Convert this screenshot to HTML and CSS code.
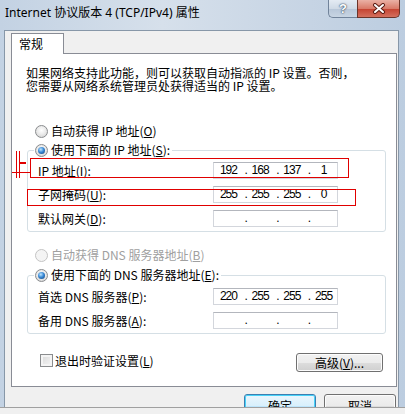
FILE: index.html
```html
<!DOCTYPE html>
<html lang="zh-CN">
<head>
    <meta charset="UTF-8">
    <meta name="viewport" content="width=device-width, initial-scale=1.0">
    <title>Internet 协议版本 4 (TCP/IPv4) 属性</title>
    <link rel="stylesheet" href="styles.css">
</head>
<body>
<div class="window">
    <div class="titlebar">
        <span class="title">Internet 协议版本 4 (TCP/IPv4) 属性</span>
        <div class="caption-btns">
            <span class="cap-btn help">?</span>
            <span class="cap-btn close">
                <svg width="14" height="11" viewBox="0 0 14 11">
                    <path d="M3 2 L11 9 M11 2 L3 9" stroke="#5b1d14" stroke-width="4" stroke-linecap="round"/>
                    <path d="M3 2 L11 9 M11 2 L3 9" stroke="#fff" stroke-width="2" stroke-linecap="round"/>
                </svg>
            </span>
        </div>
    </div>
    <div class="dialog">
        <div class="tabs"><span class="tab">常规</span></div>
        <div class="panel">
            <svg class="marker" width="20" height="30" viewBox="0 0 20 30">
                <path d="M4.5 1 V28 M7.5 1 V28 M0 22.5 H18" stroke="#e00000" stroke-width="1" fill="none"/>
                <rect x="8" y="12" width="6" height="2" fill="#e00000"/>
            </svg>
            <p class="intro">如果网络支持此功能，则可以获取自动指派的 IP 设置。否则，<br>您需要从网络系统管理员处获得适当的 IP 设置。</p>
            <label class="radio outer"><span class="dot"></span>自动获得 IP 地址(<u>O</u>)</label>
            <fieldset class="group">
                <legend><label class="radio"><span class="dot on"></span>使用下面的 IP 地址(<u>S</u>):</label></legend>
                <div class="row mark-ip">
                    <span class="label">IP 地址(<u>I</u>):</span>
                    <span class="ip"><span>192</span><i>.</i><span>168</span><i>.</i><span>137</span><i>.</i><span>1</span></span>
                </div>
                <div class="row mark-mask">
                    <span class="label">子网掩码(<u>U</u>):</span>
                    <span class="ip"><span>255</span><i>.</i><span>255</span><i>.</i><span>255</span><i>.</i><span>0</span></span>
                </div>
                <div class="row">
                    <span class="label">默认网关(<u>D</u>):</span>
                    <span class="ip"><span></span><i>.</i><span></span><i>.</i><span></span><i>.</i><span></span></span>
                </div>
            </fieldset>
            <label class="radio outer disabled"><span class="dot"></span>自动获得 DNS 服务器地址(<u>B</u>)</label>
            <fieldset class="group dns">
                <legend><label class="radio"><span class="dot on"></span>使用下面的 DNS 服务器地址(<u>E</u>):</label></legend>
                <div class="row">
                    <span class="label">首选 DNS 服务器(<u>P</u>):</span>
                    <span class="ip"><span>220</span><i>.</i><span>255</span><i>.</i><span>255</span><i>.</i><span>255</span></span>
                </div>
                <div class="row">
                    <span class="label">备用 DNS 服务器(<u>A</u>):</span>
                    <span class="ip"><span></span><i>.</i><span></span><i>.</i><span></span><i>.</i><span></span></span>
                </div>
            </fieldset>
            <div class="footer">
                <label class="check"><span class="box"></span>退出时验证设置(<u>L</u>)</label>
                <button class="btn advanced">高级(<u>V</u>)...</button>
            </div>
        </div>
        <div class="actions">
            <button class="btn default">确定</button>
            <button class="btn">取消</button>
        </div>
    </div>
</div>
<div class="strip"></div>
</body>
</html>
```

FILE: styles.css
```css
html, body {
    margin: 0;
    padding: 0;
    background-color: #f0f0f0;
}
body {
    font-family: "Noto Sans CJK SC", sans-serif;
    font-size: 12px;
    color: #000;
}
.window {
    width: 405px;
    height: 407px;
    box-sizing: border-box;
    padding: 0 6px 0 4px;
    overflow: hidden;
    background: linear-gradient(90deg, #c3d2e3, #d6e0eb 40%, #c9d6e5 70%, #bccde0);
}
.titlebar {
    height: 30px;
    display: flex;
    justify-content: space-between;
    align-items: flex-start;
}
.title {
    font-family: "Noto Sans", "Noto Sans CJK SC", sans-serif;
    font-size: 12px;
    line-height: 16px;
    padding: 5px 0 0 1px;
}
.caption-btns {
    display: flex;
    margin-right: -1px;
}
.cap-btn {
    height: 18px;
    box-sizing: border-box;
    display: flex;
    align-items: center;
    justify-content: center;
}
.help {
    width: 29px;
    border: 1px solid #71839a;
    border-top: none;
    border-right: none;
    border-radius: 0 0 0 5px;
    background: linear-gradient(#e4ebf3, #cfdae6 50%, #b7c6d8 51%, #c8d5e3);
    color: #fff;
    font-family: "Liberation Sans", sans-serif;
    font-weight: bold;
    font-size: 13px;
    text-shadow: 0 0 2px #2b3f57, 0 0 1px #2b3f57;
}
.close {
    width: 43px;
    border: 1px solid #6b3429;
    border-top: none;
    border-radius: 0 0 5px 0;
    background: linear-gradient(#eab1a5, #d97b69 50%, #c4412f 51%, #d4705e);
}
.dialog {
    height: 377px;
    border: 1px solid #8797a8;
    background-color: #f0f0f0;
    padding: 2px 1px 0 6px;
}
.tabs {
    display: flex;
}
.tab {
    position: relative;
    z-index: 1;
    width: 53px;
    height: 21px;
    box-sizing: border-box;
    margin-bottom: -1px;
    padding-left: 7px;
    line-height: 20px;
    background-color: #fff;
    border: 1px solid #898c95;
    border-bottom: none;
}
.panel {
    position: relative;
    height: 334px;
    box-sizing: border-box;
    border: 1px solid #898c95;
    background-color: #fff;
    padding: 12px 0 0 14px;
}
.marker {
    position: absolute;
    left: 0;
    top: 96px;
}
.intro {
    margin: 0;
    line-height: 13px;
}
.radio {
    display: flex;
    align-items: center;
    height: 16px;
    line-height: 16px;
    white-space: nowrap;
}
.radio.outer {
    margin: 31px 0 0 9px;
}
.radio.disabled {
    margin-top: 15px;
    color: #a0a0a0;
}
.dot {
    position: relative;
    width: 13px;
    height: 13px;
    box-sizing: border-box;
    margin-right: 3px;
    border-radius: 50%;
    border: 1px solid #8a8c8e;
    background: radial-gradient(circle at 50% 40%, #fff 0, #ececec 45%, #cdcdcd 100%);
}
.disabled .dot {
    border-color: #c4c4c4;
    background: #f4f4f4;
}
.dot.on::after {
    content: "";
    position: absolute;
    top: 2px;
    left: 2px;
    width: 7px;
    height: 7px;
    border-radius: 50%;
    background: radial-gradient(circle at 40% 35%, #bfe6ff 0, #3a8ad6 45%, #0c3b73 100%);
}
.group {
    margin: 3px 10px 0 1px;
    padding: 0 0 1px 10px;
    border: 1px solid #d5dfe5;
    border-radius: 3px;
}
.group.dns {
    margin-top: 4px;
    padding-top: 1px;
}
.group legend {
    margin-left: -4px;
    padding: 0 2px 0 1px;
}
.row {
    display: flex;
    align-items: center;
    height: 24px;
    white-space: nowrap;
}
.label {
    width: 175px;
}
.ip {
    display: flex;
    width: 125px;
    height: 17px;
    box-sizing: border-box;
    padding-left: 1px;
    border: 1px solid #d3d6dc;
    border-top-color: #b3b6bd;
    font-family: "Liberation Sans", sans-serif;
    font-size: 12px;
    letter-spacing: -1px;
    line-height: 15px;
}
.ip span {
    width: 27px;
    text-align: center;
}
.ip i {
    font-style: normal;
    width: 5px;
    text-align: right;
}
.mark-ip, .mark-mask {
    position: relative;
}
.mark-ip::after, .mark-mask::after {
    content: "";
    position: absolute;
    box-sizing: border-box;
    border: 1px solid #e00000;
}
.mark-ip::after {
    left: -8px;
    top: 0;
    width: 319px;
    height: 20px;
}
.mark-mask::after {
    left: -11px;
    top: 7px;
    width: 329px;
    height: 17px;
}
.footer {
    display: flex;
    justify-content: space-between;
    height: 19px;
    margin: 19px 13px 0 14px;
}
.check {
    display: flex;
    align-items: center;
    height: 13px;
    margin-top: 1px;
}
.box {
    width: 13px;
    height: 13px;
    box-sizing: border-box;
    margin-right: 2px;
    border: 1px solid #8a8c8e;
    background: linear-gradient(135deg, #d8d8d8, #f6f6f6);
    box-shadow: inset 0 0 0 2px #f4f4f4;
}
.btn {
    font-family: "Noto Sans CJK SC", sans-serif;
    font-size: 12px;
    color: #000;
    padding: 0;
    border: 1px solid #707070;
    border-radius: 3px;
    background: linear-gradient(#f2f2f2, #ebebeb 50%, #dddddd 51%, #cfcfcf);
    box-shadow: inset 0 0 0 1px #fcfcfc;
}
.advanced {
    width: 87px;
    height: 19px;
    line-height: 17px;
}
.actions {
    display: flex;
    justify-content: flex-end;
    gap: 8px;
    margin: 7px 1px 0 0;
}
.actions .btn {
    width: 72px;
    height: 23px;
    line-height: 21px;
}
.btn.default {
    border-color: #3c7fb1;
    box-shadow: inset 0 0 0 1px #48d2f8;
    background: linear-gradient(#eaf6fd, #d9f0fc 50%, #bee6fd 51%, #a7d9f5);
}
.strip {
    height: 7px;
    border-top: 1px solid #a0a0a0;
    background-color: #f0f0f0;
}
```
